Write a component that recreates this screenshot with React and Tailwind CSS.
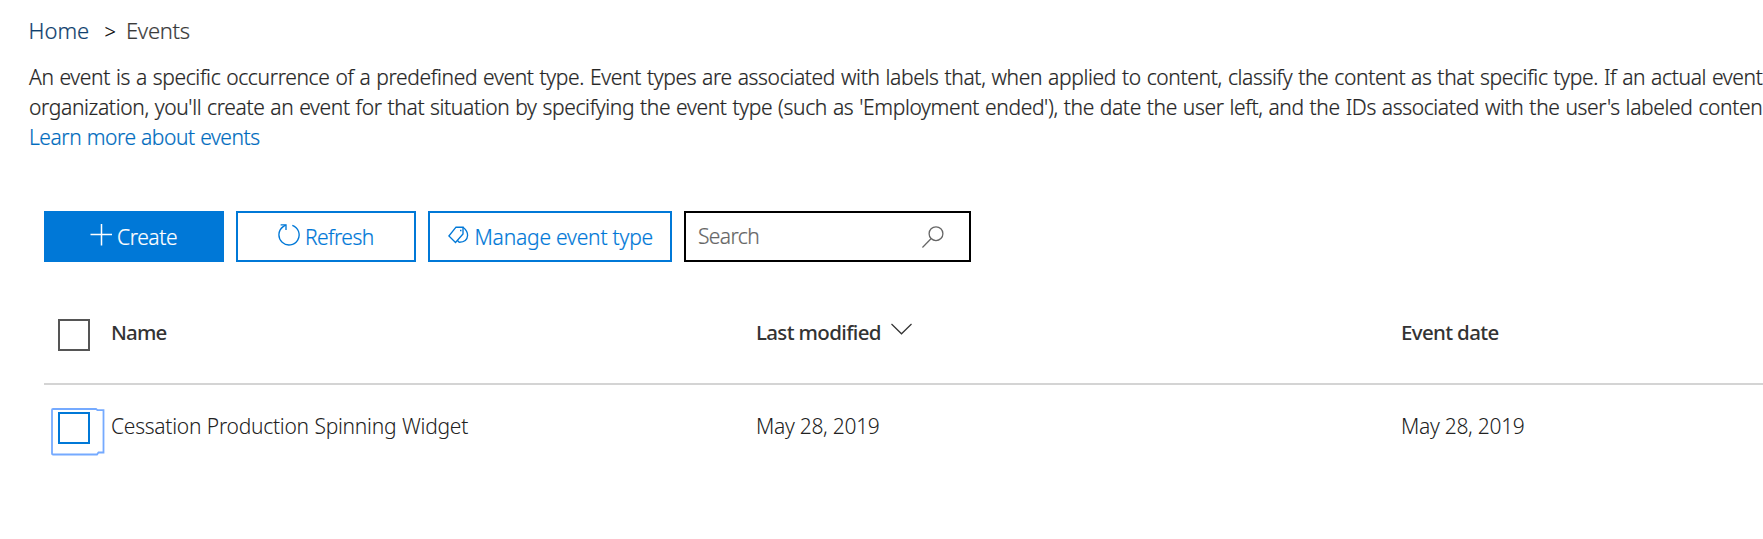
function PlusIcon() {
  return (
    <svg className="size-[22px] shrink-0" viewBox="0 0 22 22" fill="none" stroke="currentColor" strokeWidth="1.5">
      <path d="M11.5 0v21.5M.5 10.5h21.500" />
    </svg>
  );
}

function RefreshIcon() {
  return (
    <svg className="size-[22px] shrink-0" viewBox="0 0 22 22" fill="none" stroke="currentColor" strokeWidth="1.35">
      <path d="M14.300 1.3A10.100 10.100 0 1 1 5.200 2.600L7.700 1" />
      <path d="M2.600 .8H8v5.200" />
    </svg>
  );
}

function TagIcon() {
  return (
    <svg className="h-[18px] w-[21px] shrink-0" viewBox="0 0 21 18" fill="none" stroke="currentColor" strokeWidth="1.35">
      <path d="M8 1.200H15V8L7.500 16.500 .9 10z" />
      <path d="M15 1.200C18.500 4 19.800 6 19.600 9.500C19.200 14.500 15.500 16.300 11 16.200L9.500 14.500" />
      <path d="M12 4.500h1.500" />
    </svg>
  );
}

function SearchIcon() {
  return (
    <svg className="size-[22px] shrink-0" viewBox="0 0 22 22" fill="none" stroke="currentColor" strokeWidth="1.3">
      <circle cx="14" cy="7.700" r="6.900" />
      <path d="M9.200 12.500L.4 21.500" />
    </svg>
  );
}

function ChevronIcon() {
  return (
    <svg className="h-3 w-[22px] shrink-0" viewBox="0 0 22 12" fill="none" stroke="currentColor" strokeWidth="1.2">
      <path d="M.5 1l10 9.800L20.500 1" />
    </svg>
  );
}

export default function App() {
  return (
    <div className="h-[539px] w-full overflow-hidden bg-white pt-[15px] font-['Noto_Sans','Open_Sans',sans-serif] text-[21px] leading-[30px] font-light whitespace-nowrap text-[#262626] [-webkit-text-stroke:0.2px]">
      <nav className="flex h-[30px] pl-[28.5px] text-[22px]">
        <a className="w-[76px] text-[#0f3f6e]">Home</a>
        <span className="w-[21.5px] pt-0.5 text-[20px] text-black">&gt;</span>
        <span className="tracking-[-0.3px] text-[#3b3b3b]">Events</span>
      </nav>

      <div className="mt-[17px] pl-[29px]">
        <p className="tracking-[-0.336px] [word-spacing:0.75px]">
          An event is a specific occurrence of a predefined event type. Event types are associated with labels that, when applied to content, classify the content as that specific type. If an actual event
        </p>
        <p className="tracking-[-0.352px] [word-spacing:0.75px]">
          organization, you'll create an event for that situation by specifying the event type (such as 'Employment ended'), the date the user left, and the IDs associated with the user's labeled conten
        </p>
        <a className="block tracking-[-0.45px] text-[#006cbe] [word-spacing:0.5px]">Learn more about events</a>
      </div>

      <div className="mt-[59px] flex h-[51px] gap-3 pl-[44px]">
        <button className="flex w-[180px] items-start bg-[#0078d7] pt-[11px] pl-[46px] text-white">
          <span className="mt-0.5"><PlusIcon /></span>
          <span className="ml-[5px] tracking-[-0.4px]">Create</span>
        </button>
        <button className="flex w-[180px] items-start border-2 border-[#0078d7] pt-[9px] pl-[40px] text-[#0078d7]">
          <span className="mt-0.5"><RefreshIcon /></span>
          <span className="ml-[5px] tracking-[-0.55px]">Refresh</span>
        </button>
        <button className="flex w-[244px] items-start border-2 border-[#0078d7] pt-[9px] pl-[18px] text-[#0078d7]">
          <span className="mt-1"><TagIcon /></span>
          <span className="ml-[5.5px] tracking-[-0.2px]">Manage event type</span>
        </button>
        <div className="flex w-[287px] items-start justify-between border-2 border-black pt-2 pr-[25px] pl-3 text-[#666]">
          <span className="tracking-[-0.6px]">Search</span>
          <span className="mt-[5px]"><SearchIcon /></span>
        </div>
      </div>

      <div className="ml-[44px] [-webkit-text-stroke:0px]">
        <div className="flex h-[123px] border-b-2 border-[#d4d4d4] pt-[55px] pl-[14px] text-[20.5px] font-medium text-[#333]">
          <span className="mt-0.5 size-8 border-2 border-[#555]" />
          <span className="ml-[21px] w-[645px] tracking-[-0.85px]">Name</span>
          <span className="flex w-[645px]">
            <span className="w-[135px] tracking-[-0.65px]">Last modified</span>
            <span className="mt-[6px]"><ChevronIcon /></span>
          </span>
          <span className="tracking-[-0.65px]">Event date</span>
        </div>
        <div className="flex pt-[25px] pl-[14px] text-[#222]">
          <span className="relative mt-0.5 size-8 border-2 border-[#0078d7]">
            <svg className="absolute -top-[6px] -left-[9px] h-12 w-[54px]" viewBox="0 0 54 48" fill="none" stroke="#75aaff" strokeWidth="1.8">
              <path d="M2 1h43l1.500 1.200H52.500V44.500h-5L46 46.500H2q-1 0-1-1V2q0-1 1-1z" />
            </svg>
          </span>
          <span className="ml-[21px] w-[645px] pt-px tracking-[-0.27px] [word-spacing:0.5px]">Cessation Production Spinning Widget</span>
          <span className="w-[645px] pt-px tracking-[-0.29px]">May 28, 2019</span>
          <span className="pt-px tracking-[-0.29px]">May 28, 2019</span>
        </div>
      </div>
    </div>
  );
}
